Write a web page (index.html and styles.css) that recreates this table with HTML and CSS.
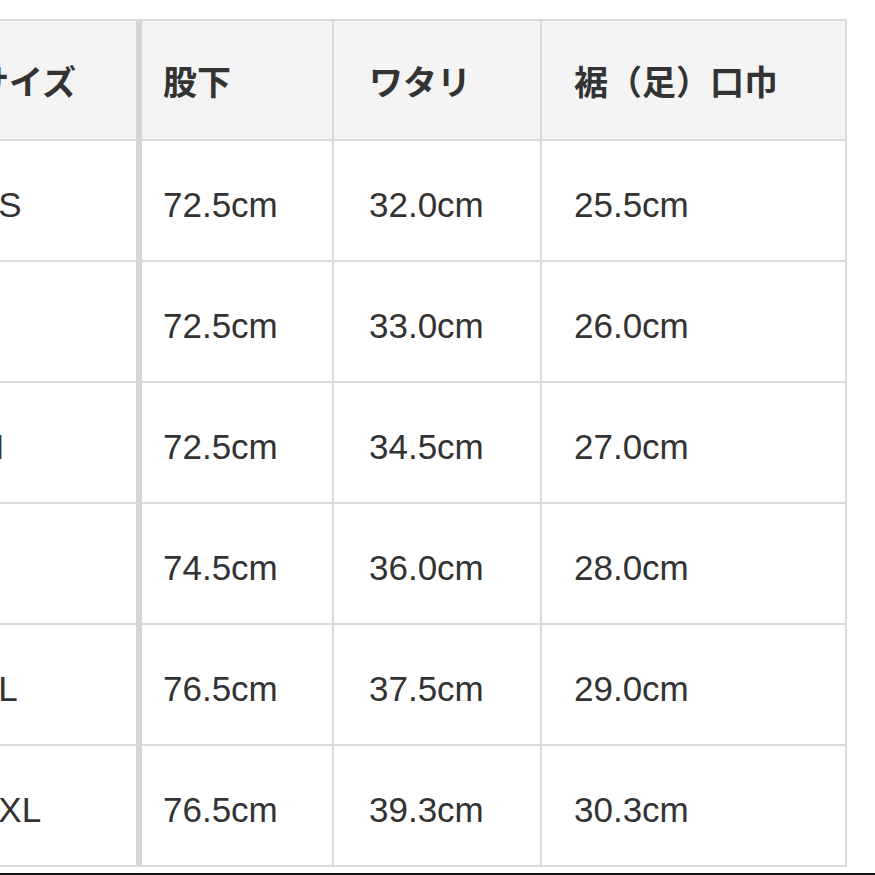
FILE: index.html
```html
<!DOCTYPE html>
<html lang="ja">
<head>
<meta charset="utf-8">
<title>サイズ表</title>
<link rel="stylesheet" href="styles.css">
</head>
<body>
<div class="page">
  <div class="size-table">
    <div class="cell head c1">サイズ</div>
    <div class="cell head c2">股下</div>
    <div class="cell head c3">ワタリ</div>
    <div class="cell head c4">裾（足）口巾</div>

    <div class="cell c1">XS</div>
    <div class="cell c2">72.5cm</div>
    <div class="cell c3">32.0cm</div>
    <div class="cell c4">25.5cm</div>

    <div class="cell c1">S</div>
    <div class="cell c2">72.5cm</div>
    <div class="cell c3">33.0cm</div>
    <div class="cell c4">26.0cm</div>

    <div class="cell c1">M</div>
    <div class="cell c2">72.5cm</div>
    <div class="cell c3">34.5cm</div>
    <div class="cell c4">27.0cm</div>

    <div class="cell c1">L</div>
    <div class="cell c2">74.5cm</div>
    <div class="cell c3">36.0cm</div>
    <div class="cell c4">28.0cm</div>

    <div class="cell c1">XL</div>
    <div class="cell c2">76.5cm</div>
    <div class="cell c3">37.5cm</div>
    <div class="cell c4">29.0cm</div>

    <div class="cell c1">XXL</div>
    <div class="cell c2">76.5cm</div>
    <div class="cell c3">39.3cm</div>
    <div class="cell c4">30.3cm</div>
  </div>
  <div class="bottom-bar"></div>
</div>
</body>
</html>
```
FILE: styles.css
```css
html, body {
  margin: 0;
  padding: 0;
  background: #ffffff;
  overflow: hidden;
}

.page {
  width: 875px;
  height: 875px;
  padding-top: 19px;
  box-sizing: border-box;
  display: flex;
  flex-direction: column;
}

.size-table {
  display: grid;
  grid-template-columns: 202px 192px 208px 305px;
  grid-auto-rows: 121px;
  grid-template-rows: 120px;
  margin-left: -60px;
  width: 907px;
  border-top: 2px solid #dadada;
  font-family: "Liberation Sans", "Noto Sans CJK JP", sans-serif;
  font-size: 35px;
  line-height: 38px;
  color: #333333;
}

.cell {
  box-sizing: border-box;
  border-right: 2px solid #dadada;
  border-bottom: 2px solid #dadada;
  padding-top: 45px;
  padding-left: 35px;
  white-space: nowrap;
  overflow: hidden;
  background: #ffffff;
}

.cell.head {
  background: #f4f4f4;
  font-weight: bold;
  font-size: 34px;
  padding-top: 43px;
}

.c1 {
  padding-left: 35px;
  border-right: 6px solid #d6d6d6;
}

.c2 {
  padding-left: 21px;
}

.c4 {
  padding-left: 32px;
}

.bottom-bar {
  margin-top: 6px;
  height: 2px;
  background: #111111;
}
```
